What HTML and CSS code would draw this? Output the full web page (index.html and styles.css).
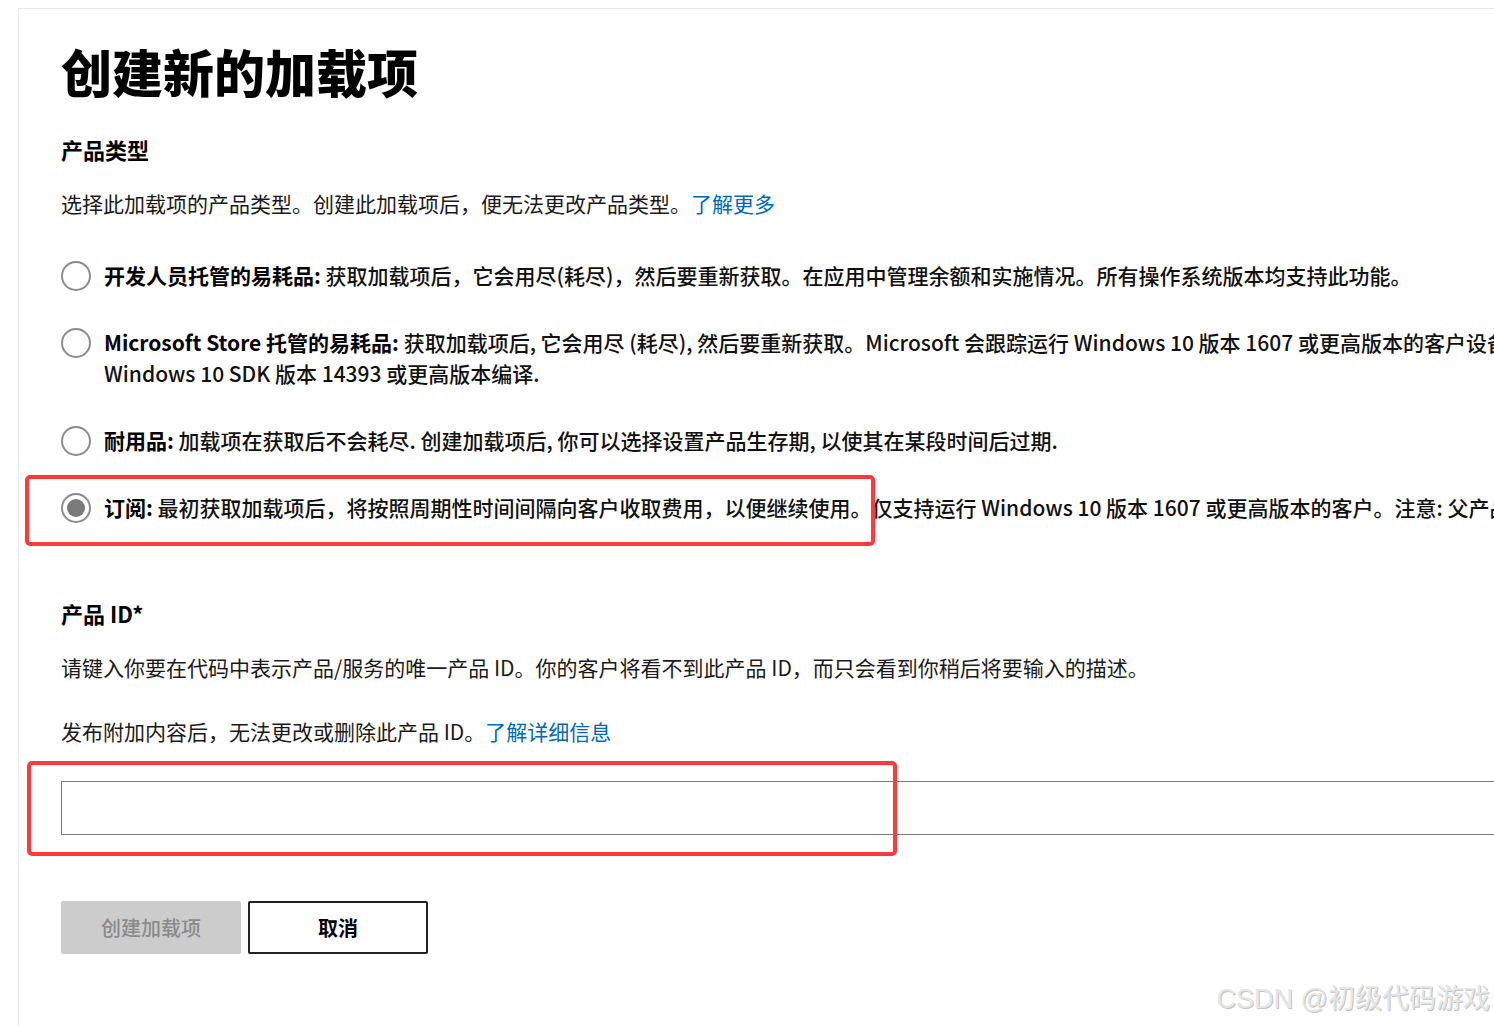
FILE: index.html
```html
<html><head><meta charset="utf-8">
<title>创建新的加载项</title>
<link rel="stylesheet" href="styles.css">
</head><body>
<div class="frame">
  <div class="content">
    <h1>创建新的加载项</h1>

    <h2>产品类型</h2>
    <p class="desc">选择此加载项的产品类型。创建此加载项后，便无法更改产品类型。<a href="#">了解更多</a></p>

    <div class="options">
      <label class="option">
        <span class="radio"></span>
        <span class="text"><b>开发人员托管的易耗品:</b> 获取加载项后，它会用尽(耗尽)，然后要重新获取。在应用中管理余额和实施情况。所有操作系统版本均支持此功能。</span>
      </label>
      <label class="option">
        <span class="radio"></span>
        <span class="text"><b>Microsoft Store 托管的易耗品:</b> 获取加载项后, 它会用尽 (耗尽), 然后要重新获取。Microsoft 会跟踪运行 Windows 10 版本 1607 或更高版本的客户设备上的余额。仅支持使用<br>Windows 10 SDK 版本 14393 或更高版本编译.</span>
      </label>
      <label class="option">
        <span class="radio"></span>
        <span class="text"><b>耐用品:</b> 加载项在获取后不会耗尽. 创建加载项后, 你可以选择设置产品生存期, 以使其在某段时间后过期.</span>
      </label>
      <label class="option marked">
        <span class="radio checked"></span>
        <span class="text"><b>订阅:</b> 最初获取加载项后，将按照周期性时间间隔向客户收取费用，以便继续使用。仅支持运行 Windows 10 版本 1607 或更高版本的客户。注意: 父产品必须是应用。</span>
        <span class="callout callout-option"></span>
      </label>
    </div>

    <h2 class="id-title">产品 ID*</h2>
    <p class="desc">请键入你要在代码中表示产品/服务的唯一产品 ID。你的客户将看不到此产品 ID，而只会看到你稍后将要输入的描述。</p>
    <p class="desc note">发布附加内容后，无法更改或删除此产品 ID。<a href="#">了解详细信息</a></p>

    <div class="field">
      <input type="text" class="id-input">
      <span class="callout callout-field"></span>
    </div>

    <div class="actions">
      <button class="btn btn-primary" disabled>创建加载项</button>
      <button class="btn btn-secondary">取消</button>
    </div>
  </div>
</div>
<div class="watermark">CSDN @初级代码游戏</div>
</body></html>
```

FILE: styles.css
```css
html, body {
  margin: 0;
  padding: 0;
  overflow: hidden;
  background-color: #fff;
}
body {
  font-family: "Noto Sans CJK SC", "Noto Sans", sans-serif;
  color: #1a1a1a;
  width: 1494px;
  height: 1026px;
  position: relative;
}
.frame {
  margin: 8px 0 0 18px;
  border-top: 1px solid #e8e8e8;
  border-left: 1px solid #ececec;
  height: 1017px;
}
.content {
  padding: 32px 0 0 42px;
  width: 1800px;
}
h1 {
  margin: 0;
  font-size: 51px;
  line-height: 60px;
  font-weight: 900;
  color: #000;
}
h2 {
  margin: 33px 0 0;
  font-size: 22px;
  line-height: 30px;
  font-weight: 700;
  color: #000;
}
.desc {
  margin: 24px 0 0;
  font-size: 21px;
  line-height: 30px;
  white-space: nowrap;
}
.desc a {
  color: #0067b8;
  text-decoration: none;
}
.options {
  display: flex;
  flex-direction: column;
  gap: 36px;
  margin-top: 42px;
}
.option {
  position: relative;
  display: flex;
  align-items: flex-start;
  gap: 13px;
  font-size: 21px;
  line-height: 31px;
  font-weight: 500;
  color: #111;
}
.option .text {
  white-space: nowrap;
}
.option b {
  font-weight: 700;
  color: #000;
}
.radio {
  flex: none;
  box-sizing: border-box;
  width: 30px;
  height: 30px;
  margin-top: 1px;
  border: 2px solid #8c8c8c;
  border-radius: 50%;
  display: flex;
  align-items: center;
  justify-content: center;
}
.radio.checked::after {
  content: "";
  width: 18px;
  height: 18px;
  border-radius: 50%;
  background-color: #7a7a7a;
}
.callout {
  position: absolute;
  box-sizing: border-box;
  border: 4px solid #ff3a3a;
  border-radius: 5px;
  pointer-events: none;
}
.callout-option {
  left: -36px;
  top: -17px;
  width: 850px;
  height: 71px;
}
.id-title {
  margin-top: 75px;
}
.desc.note {
  margin-top: 34px;
}
.field {
  position: relative;
  margin-top: 35px;
}
.id-input {
  display: block;
  box-sizing: border-box;
  width: 1600px;
  height: 54px;
  margin: 0;
  border: 1px solid #7a7a7a;
  background: #fff;
}
.callout-field {
  left: -34px;
  top: -20px;
  width: 870px;
  height: 95px;
}
.actions {
  display: flex;
  gap: 7px;
  margin-top: 66px;
}
.btn {
  box-sizing: border-box;
  width: 180px;
  height: 53px;
  font-family: inherit;
  font-size: 20px;
  border-radius: 2px;
}
.btn-primary {
  background-color: #ccc;
  color: #8a8a8a;
  border: none;
  font-weight: 500;
}
.btn-secondary {
  background-color: #fff;
  color: #000;
  border: 2px solid #222;
  font-weight: 700;
}
.watermark {
  position: absolute;
  right: 4px;
  bottom: 10px;
  font-family: "Liberation Sans", "Noto Sans CJK SC", sans-serif;
  font-size: 27px;
  font-weight: 400;
  color: #e6e6e6;
  text-shadow: 1px 1px 0 #c4c4c4;
}
```
